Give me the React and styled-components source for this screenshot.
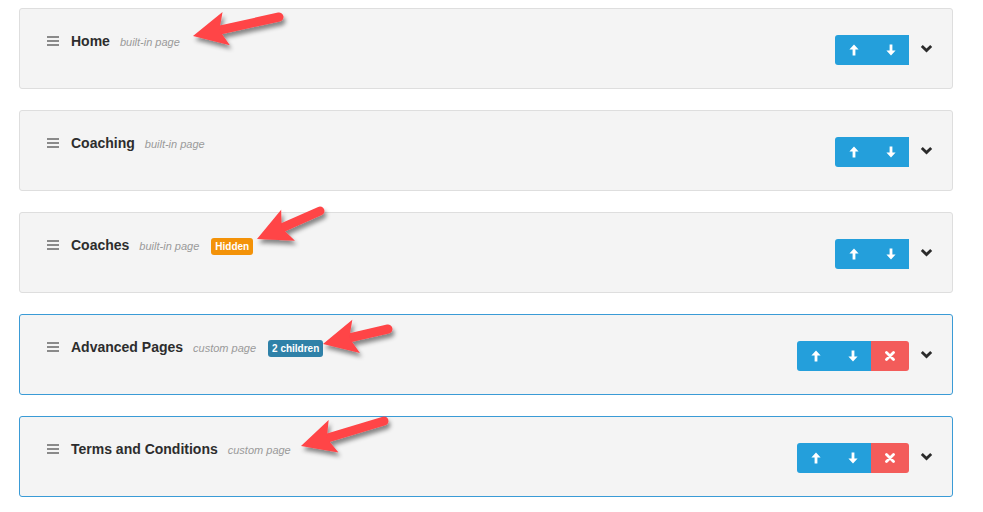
import React from 'react'
import styled, { createGlobalStyle } from 'styled-components'

const pages = [
    { title: 'Home', kind: 'built-in page' },
    { title: 'Coaching', kind: 'built-in page' },
    { title: 'Coaches', kind: 'built-in page', badge: 'Hidden', tone: 'orange' },
    { title: 'Advanced Pages', kind: 'custom page', badge: '2 children', tone: 'blue', custom: true },
    { title: 'Terms and Conditions', kind: 'custom page', custom: true },
]

// annotation arrows, page coordinates: tip then tail
const arrows = [
    [193, 36, 279, 17],
    [257, 239, 320, 211],
    [323, 344, 388, 329],
    [301, 446, 384, 421],
]

function App() {
    return (
        <Page>
            <GlobalStyle />
            <List>
                {pages.map((page) => (
                    <Card key={page.title} custom={page.custom}>
                        <Left>
                            <Handle>
                                <span />
                                <span />
                                <span />
                            </Handle>
                            <Title>{page.title}</Title>
                            <Kind>{page.kind}</Kind>
                            {page.badge && <Badge tone={page.tone}>{page.badge}</Badge>}
                        </Left>
                        <Controls>
                            <Group>
                                <MoveButton rounded="left">
                                    <ArrowIcon />
                                </MoveButton>
                                <MoveButton rounded={page.custom ? '' : 'none'}>
                                    <ArrowIcon down />
                                </MoveButton>
                                {page.custom && (
                                    <DeleteButton>
                                        <CrossIcon />
                                    </DeleteButton>
                                )}
                            </Group>
                            <Chevron />
                        </Controls>
                    </Card>
                ))}
            </List>
            <Overlay width="983" height="512" viewBox="0 0 983 512">
                <defs>
                    <filter id="shade" x="-20%" y="-40%" width="150%" height="200%">
                        <feDropShadow dx="2" dy="4" stdDeviation="2.2" floodColor="#000" floodOpacity="0.45" />
                    </filter>
                </defs>
                {arrows.map((a, i) => (
                    <Annotation key={i} tip={[a[0], a[1]]} tail={[a[2], a[3]]} />
                ))}
            </Overlay>
        </Page>
    )
}

function Annotation({ tip, tail }) {
    const dx = tail[0] - tip[0]
    const dy = tail[1] - tip[1]
    const len = Math.sqrt(dx * dx + dy * dy)
    const ux = dx / len
    const uy = dy / len
    const px = -uy
    const py = ux
    const at = (d, w) => [tip[0] + ux * d + px * w, tip[1] + uy * d + py * w]
    const w1 = at(34, 17)
    const w2 = at(34, -17)
    const notch = at(27, 0)
    const start = at(26, 0)
    return (
        <g filter="url(#shade)">
            <line
                x1={start[0]}
                y1={start[1]}
                x2={tail[0]}
                y2={tail[1]}
                stroke="#ff4447"
                strokeWidth="9"
                strokeLinecap="round"
            />
            <polygon
                points={`${tip[0]},${tip[1]} ${w1[0]},${w1[1]} ${notch[0]},${notch[1]} ${w2[0]},${w2[1]}`}
                fill="#ff4447"
            />
        </g>
    )
}

function ArrowIcon({ down }) {
    return (
        <svg width="10" height="12" viewBox="0 0 10 12" style={{ transform: down ? 'rotate(180deg)' : 'none' }}>
            <path d="M5 0.5 L9.6 5.6 L6.4 5.6 L6.4 11.5 L3.6 11.5 L3.6 5.6 L0.4 5.6 Z" fill="#fff" />
        </svg>
    )
}

function CrossIcon() {
    return (
        <svg width="10" height="10" viewBox="0 0 10 10">
            <path d="M1.5 1.5 L8.5 8.5 M8.5 1.5 L1.5 8.5" stroke="#fff" strokeWidth="2.8" strokeLinecap="round" />
        </svg>
    )
}

function Chevron() {
    return (
        <ChevronBox>
            <svg width="13" height="9" viewBox="0 0 13 9">
                <path d="M1.8 2 L6.5 6.6 L11.2 2" fill="none" stroke="#2b2b2b" strokeWidth="2.8" />
            </svg>
        </ChevronBox>
    )
}

const GlobalStyle = createGlobalStyle`
    body {
        margin: 0;
        background: #fff;
        font-family: "Liberation Sans", Arial, sans-serif;
    }
`

const Page = styled.div`
    position: relative;
    width: 983px;
    height: 512px;
    overflow: hidden;
`

const List = styled.div`
    display: flex;
    flex-direction: column;
    gap: 21px;
    padding: 8px 0 0 19px;
    width: 934px;
`

const Card = styled.div`
    display: flex;
    align-items: center;
    justify-content: space-between;
    box-sizing: border-box;
    height: 81px;
    padding: 0 19px 0 27px;
    background: #f4f4f4;
    border: 1px solid ${(props) => (props.custom ? '#3a9bd6' : '#dedede')};
    border-radius: 3px;
`

const Left = styled.div`
    display: flex;
    align-items: center;
    align-self: flex-start;
    margin-top: 23px;
    height: 18px;
`

const Handle = styled.div`
    display: flex;
    flex-direction: column;
    gap: 2px;
    width: 12px;
    margin-right: 12px;
    span {
        display: block;
        height: 2px;
        background: #8a8a8a;
    }
`

const Title = styled.span`
    font-size: 14px;
    font-weight: bold;
    color: #2d2d2d;
    margin-right: 10px;
`

const Kind = styled.span`
    font-size: 11px;
    font-style: italic;
    color: #9a9a9a;
    margin-top: 2px;
`

const Badge = styled.span`
    margin-left: 12px;
    margin-top: 3px;
    padding: 2px 4px;
    font-size: 10px;
    line-height: 13px;
    font-weight: bold;
    color: #fff;
    border-radius: 3px;
    background: ${(props) => (props.tone === 'orange' ? '#f39208' : '#2f81a8')};
`

const Controls = styled.div`
    display: flex;
    align-items: center;
    margin-top: 2px;
`

const Group = styled.div`
    display: flex;
`

const MoveButton = styled.div`
    display: flex;
    align-items: center;
    justify-content: center;
    width: 37px;
    height: 30px;
    background: #249fdb;
    border-radius: ${(props) => (props.rounded === 'left' ? '3px 0 0 3px' : '0')};
`

const DeleteButton = styled.div`
    display: flex;
    align-items: center;
    justify-content: center;
    width: 38px;
    height: 30px;
    background: #f35c5a;
    border-radius: 0 3px 3px 0;
`

const ChevronBox = styled.div`
    display: flex;
    align-items: center;
    justify-content: center;
    width: 13px;
    margin-left: 11px;
    margin-top: -3px;
`

const Overlay = styled.svg`
    position: absolute;
    top: 0;
    left: 0;
    pointer-events: none;
`

export default App
